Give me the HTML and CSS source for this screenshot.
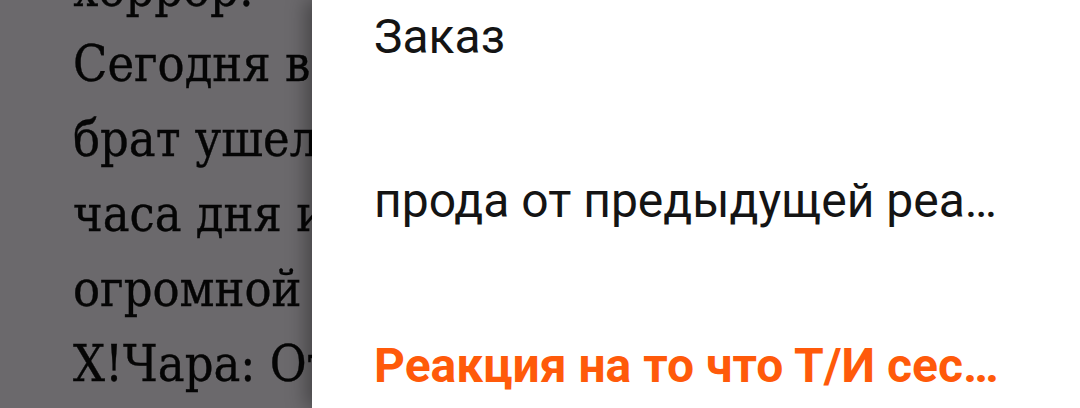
FILE: index.html
```html
<!DOCTYPE html>
<html lang="ru">
<head>
<meta charset="utf-8">
<link rel="stylesheet" href="styles.css">
</head>
<body>
<div class="screen">
  <div class="reader">
    <p class="line">хоррор:</p>
    <p class="line">Сегодня ваш брат</p>
    <p class="line">брат ушел из дома</p>
    <p class="line">часа дня и вернулся</p>
    <p class="line">огромной толпой</p>
    <p class="line">Х!Чара: Откуда</p>
  </div>
  <nav class="drawer">
    <ul class="menu">
      <li class="item">Заказ</li>
      <li class="item">прода от предыдущей реакции на то что</li>
      <li class="item item-active">Реакция на то что Т/И сестра Чары</li>
    </ul>
  </nav>
</div>
</body>
</html>
```
FILE: styles.css
```css
html, body {
  margin: 0;
  padding: 0;
}
body {
  width: 1080px;
  height: 408px;
  overflow: hidden;
  background: #6b696c;
}
.screen {
  position: relative;
  width: 1080px;
  height: 408px;
  overflow: hidden;
}
.reader {
  padding-left: 73px;
  margin-top: -48px;
  font-family: "DejaVu Serif Condensed", "DejaVu Serif", "Liberation Serif", serif;
  font-stretch: condensed;
  font-size: 50px;
  line-height: 75px;
  color: #050505;
  -webkit-text-stroke: 0.35px #050505;
}
.line {
  margin: 0;
  white-space: nowrap;
}
.drawer {
  position: absolute;
  top: 0;
  bottom: 0;
  left: 312px;
  right: 0;
  background: #ffffff;
  box-shadow: -6px 0 18px rgba(0, 0, 0, 0.35);
}
.menu {
  list-style: none;
  margin: 0;
  padding: 8.5px 78px 0 62px;
  display: flex;
  flex-direction: column;
  gap: 108.5px;
  font-family: Roboto, "Noto Sans", sans-serif;
  font-size: 48px;
  color: #141414;
}
.item {
  height: 56px;
  line-height: 56px;
  white-space: nowrap;
  overflow: hidden;
  text-overflow: ellipsis;
}
.item-active {
  color: #ff5a0a;
  font-weight: 700;
}
```
